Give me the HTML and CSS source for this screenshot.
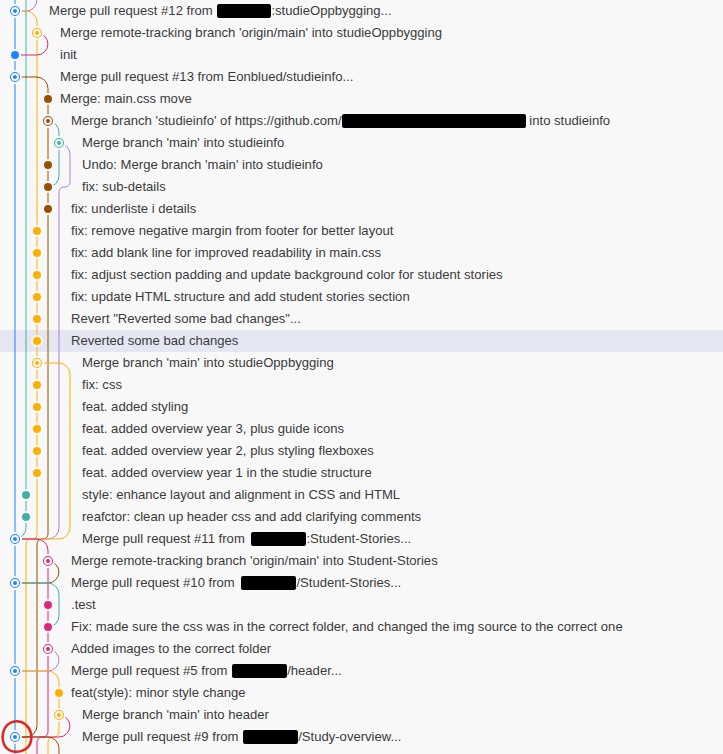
FILE: index.html
```html
<!DOCTYPE html>
<html lang="en">
<head>
<meta charset="utf-8">
<title>Source Control Graph</title>
<link rel="stylesheet" href="styles.css">
</head>
<body>
<div class="list">
  <div class="row"><svg class="graph" width="44" height="22"><path class="b" d="M11 0V22"/><path class="t" d="M22 0V22"/><path class="u" d="M33 0A11 11 0 0 1 22 11H11"/><path class="y" d="M22 11A11 11 0 0 1 33 22M22 11H11"/><circle class="b" cx="11" cy="11" r="6"/><circle class="b" cx="11" cy="11" r="3"/></svg><span class="label">Merge pull request #12 from <span class="redact w54"></span>:studieOppbygging...</span></div>

  <div class="row"><svg class="graph" width="55" height="22"><path class="b" d="M11 0V22"/><path class="t" d="M22 0V22"/><path class="y" d="M33 0V22"/><path class="p" d="M33 11A11 11 0 0 1 44 22"/><circle class="y" cx="33" cy="11" r="6"/><circle class="y" cx="33" cy="11" r="3"/></svg><span class="label">Merge remote-tracking branch 'origin/main' into studieOppbygging</span></div>

  <div class="row"><svg class="graph" width="55" height="22"><path class="b" d="M11 0V22"/><path class="t" d="M22 0V22"/><path class="y" d="M33 0V22"/><path class="p" d="M44 0A11 11 0 0 1 33 11H11"/><circle class="b" cx="11" cy="11" r="5"/></svg><span class="label">init</span></div>

  <div class="row"><svg class="graph" width="55" height="22"><path class="b" d="M11 0V22"/><path class="t" d="M22 0V22"/><path class="y" d="M33 0V22"/><path class="r" d="M33 11A11 11 0 0 1 44 22M33 11H11"/><circle class="b" cx="11" cy="11" r="6"/><circle class="b" cx="11" cy="11" r="3"/></svg><span class="label">Merge pull request #13 from Eonblued/studieinfo...</span></div>

  <div class="row"><svg class="graph" width="55" height="22"><path class="b" d="M11 0V22"/><path class="t" d="M22 0V22"/><path class="y" d="M33 0V22"/><path class="r" d="M44 0V22"/><circle class="r" cx="44" cy="11" r="5"/></svg><span class="label">Merge: main.css move</span></div>

  <div class="row"><svg class="graph" width="66" height="22"><path class="b" d="M11 0V22"/><path class="t" d="M22 0V22"/><path class="y" d="M33 0V22"/><path class="r" d="M44 0V22"/><path class="t" d="M44 11A11 11 0 0 1 55 22"/><circle class="r" cx="44" cy="11" r="6"/><circle class="r" cx="44" cy="11" r="3"/></svg><span class="label">Merge branch 'studieinfo' of https://github.com/<span class="redact w184 m0"></span> into studieinfo</span></div>

  <div class="row"><svg class="graph" width="77" height="22"><path class="b" d="M11 0V22"/><path class="t" d="M22 0V22"/><path class="y" d="M33 0V22"/><path class="r" d="M44 0V22"/><path class="t" d="M55 0V22"/><path class="u" d="M55 11A11 11 0 0 1 66 22"/><circle class="t" cx="55" cy="11" r="6"/><circle class="t" cx="55" cy="11" r="3"/></svg><span class="label">Merge branch 'main' into studieinfo</span></div>

  <div class="row"><svg class="graph" width="77" height="22"><path class="b" d="M11 0V22"/><path class="t" d="M22 0V22"/><path class="y" d="M33 0V22"/><path class="r" d="M44 0V22"/><path class="t" d="M55 0V22"/><path class="u" d="M66 0V22"/><circle class="r" cx="44" cy="11" r="5"/></svg><span class="label">Undo: Merge branch 'main' into studieinfo</span></div>

  <div class="row"><svg class="graph" width="77" height="22"><path class="b" d="M11 0V22"/><path class="t" d="M22 0V22"/><path class="y" d="M33 0V22"/><path class="r" d="M44 0V22"/><path class="t" d="M55 0A11 11 0 0 1 44 11"/><path class="u" d="M66 0V6A5 5 0 0 1 61 11H60A5 5 0 0 0 55 16V22"/><circle class="r" cx="44" cy="11" r="5"/></svg><span class="label">fix: sub-details</span></div>

  <div class="row"><svg class="graph" width="66" height="22"><path class="b" d="M11 0V22"/><path class="t" d="M22 0V22"/><path class="y" d="M33 0V22"/><path class="r" d="M44 0V22"/><path class="u" d="M55 0V22"/><circle class="r" cx="44" cy="11" r="5"/></svg><span class="label">fix: underliste i details</span></div>

  <div class="row"><svg class="graph" width="66" height="22"><path class="b" d="M11 0V22"/><path class="t" d="M22 0V22"/><path class="y" d="M33 0V22"/><path class="r" d="M44 0V22"/><path class="u" d="M55 0V22"/><circle class="y" cx="33" cy="11" r="5"/></svg><span class="label">fix: remove negative margin from footer for better layout</span></div>

  <div class="row"><svg class="graph" width="66" height="22"><path class="b" d="M11 0V22"/><path class="t" d="M22 0V22"/><path class="y" d="M33 0V22"/><path class="r" d="M44 0V22"/><path class="u" d="M55 0V22"/><circle class="y" cx="33" cy="11" r="5"/></svg><span class="label">fix: add blank line for improved readability in main.css</span></div>

  <div class="row"><svg class="graph" width="66" height="22"><path class="b" d="M11 0V22"/><path class="t" d="M22 0V22"/><path class="y" d="M33 0V22"/><path class="r" d="M44 0V22"/><path class="u" d="M55 0V22"/><circle class="y" cx="33" cy="11" r="5"/></svg><span class="label">fix: adjust section padding and update background color for student stories</span></div>

  <div class="row"><svg class="graph" width="66" height="22"><path class="b" d="M11 0V22"/><path class="t" d="M22 0V22"/><path class="y" d="M33 0V22"/><path class="r" d="M44 0V22"/><path class="u" d="M55 0V22"/><circle class="y" cx="33" cy="11" r="5"/></svg><span class="label">fix: update HTML structure and add student stories section</span></div>

  <div class="row"><svg class="graph" width="66" height="22"><path class="b" d="M11 0V22"/><path class="t" d="M22 0V22"/><path class="y" d="M33 0V22"/><path class="r" d="M44 0V22"/><path class="u" d="M55 0V22"/><circle class="y" cx="33" cy="11" r="5"/></svg><span class="label">Revert "Reverted some bad changes"...</span></div>

  <div class="row sel"><svg class="graph" width="66" height="22"><path class="b" d="M11 0V22"/><path class="t" d="M22 0V22"/><path class="y" d="M33 0V22"/><path class="r" d="M44 0V22"/><path class="u" d="M55 0V22"/><circle class="y" cx="33" cy="11" r="5"/></svg><span class="label">Reverted some bad changes</span></div>

  <div class="row"><svg class="graph" width="77" height="22"><path class="b" d="M11 0V22"/><path class="t" d="M22 0V22"/><path class="y" d="M33 0V22"/><path class="r" d="M44 0V22"/><path class="u" d="M55 0V22"/><path class="y" d="M55 11A11 11 0 0 1 66 22M55 11H33"/><circle class="y" cx="33" cy="11" r="6"/><circle class="y" cx="33" cy="11" r="3"/></svg><span class="label">Merge branch 'main' into studieOppbygging</span></div>

  <div class="row"><svg class="graph" width="77" height="22"><path class="b" d="M11 0V22"/><path class="t" d="M22 0V22"/><path class="y" d="M33 0V22"/><path class="r" d="M44 0V22"/><path class="u" d="M55 0V22"/><path class="y" d="M66 0V22"/><circle class="y" cx="33" cy="11" r="5"/></svg><span class="label">fix: css</span></div>

  <div class="row"><svg class="graph" width="77" height="22"><path class="b" d="M11 0V22"/><path class="t" d="M22 0V22"/><path class="y" d="M33 0V22"/><path class="r" d="M44 0V22"/><path class="u" d="M55 0V22"/><path class="y" d="M66 0V22"/><circle class="y" cx="33" cy="11" r="5"/></svg><span class="label">feat. added styling</span></div>

  <div class="row"><svg class="graph" width="77" height="22"><path class="b" d="M11 0V22"/><path class="t" d="M22 0V22"/><path class="y" d="M33 0V22"/><path class="r" d="M44 0V22"/><path class="u" d="M55 0V22"/><path class="y" d="M66 0V22"/><circle class="y" cx="33" cy="11" r="5"/></svg><span class="label">feat. added overview year 3, plus guide icons</span></div>

  <div class="row"><svg class="graph" width="77" height="22"><path class="b" d="M11 0V22"/><path class="t" d="M22 0V22"/><path class="y" d="M33 0V22"/><path class="r" d="M44 0V22"/><path class="u" d="M55 0V22"/><path class="y" d="M66 0V22"/><circle class="y" cx="33" cy="11" r="5"/></svg><span class="label">feat. added overview year 2, plus styling flexboxes</span></div>

  <div class="row"><svg class="graph" width="77" height="22"><path class="b" d="M11 0V22"/><path class="t" d="M22 0V22"/><path class="y" d="M33 0V22"/><path class="r" d="M44 0V22"/><path class="u" d="M55 0V22"/><path class="y" d="M66 0V22"/><circle class="y" cx="33" cy="11" r="5"/></svg><span class="label">feat. added overview year 1 in the studie structure</span></div>

  <div class="row"><svg class="graph" width="77" height="22"><path class="b" d="M11 0V22"/><path class="t" d="M22 0V22"/><path class="y" d="M33 0V22"/><path class="r" d="M44 0V22"/><path class="u" d="M55 0V22"/><path class="y" d="M66 0V22"/><circle class="t" cx="22" cy="11" r="5"/></svg><span class="label">style: enhance layout and alignment in CSS and HTML</span></div>

  <div class="row"><svg class="graph" width="77" height="22"><path class="b" d="M11 0V22"/><path class="t" d="M22 0V22"/><path class="y" d="M33 0V22"/><path class="r" d="M44 0V22"/><path class="u" d="M55 0V22"/><path class="y" d="M66 0V22"/><circle class="t" cx="22" cy="11" r="5"/></svg><span class="label">reafctor: clean up header css and add clarifying comments</span></div>

  <div class="row"><svg class="graph" width="77" height="22"><path class="b" d="M11 0V22"/><path class="t" d="M22 0A11 11 0 0 1 11 11"/><path class="y" d="M33 0V6A5 5 0 0 1 28 11H27A5 5 0 0 0 22 16V22"/><path class="r" d="M44 0V6A5 5 0 0 1 39 11H38A5 5 0 0 0 33 16V22"/><path class="u" d="M55 0A11 11 0 0 1 44 11H11"/><path class="y" d="M66 0A11 11 0 0 1 55 11H11"/><path class="p" d="M33 11A11 11 0 0 1 44 22M33 11H11"/><circle class="b" cx="11" cy="11" r="6"/><circle class="b" cx="11" cy="11" r="3"/></svg><span class="label">Merge pull request #11 from <span class="redact w55 m3"></span>:Student-Stories...</span></div>

  <div class="row"><svg class="graph" width="66" height="22"><path class="b" d="M11 0V22"/><path class="y" d="M22 0V22"/><path class="r" d="M33 0V22"/><path class="p" d="M44 0V22"/><path class="r" d="M44 11A11 11 0 0 1 55 22"/><circle class="p" cx="44" cy="11" r="6"/><circle class="p" cx="44" cy="11" r="3"/></svg><span class="label">Merge remote-tracking branch 'origin/main' into Student-Stories</span></div>

  <div class="row"><svg class="graph" width="66" height="22"><path class="b" d="M11 0V22"/><path class="y" d="M22 0V22"/><path class="r" d="M33 0V22"/><path class="p" d="M44 0V22"/><path class="r" d="M55 0A11 11 0 0 1 44 11H11"/><path class="t" d="M44 11A11 11 0 0 1 55 22M44 11H11"/><circle class="b" cx="11" cy="11" r="6"/><circle class="b" cx="11" cy="11" r="3"/></svg><span class="label">Merge pull request #10 from <span class="redact w55 m3"></span>/Student-Stories...</span></div>

  <div class="row"><svg class="graph" width="66" height="22"><path class="b" d="M11 0V22"/><path class="y" d="M22 0V22"/><path class="r" d="M33 0V22"/><path class="p" d="M44 0V22"/><path class="t" d="M55 0V22"/><circle class="p" cx="44" cy="11" r="5"/></svg><span class="label">.test</span></div>

  <div class="row"><svg class="graph" width="66" height="22"><path class="b" d="M11 0V22"/><path class="y" d="M22 0V22"/><path class="r" d="M33 0V22"/><path class="p" d="M44 0V22"/><path class="t" d="M55 0A11 11 0 0 1 44 11"/><circle class="p" cx="44" cy="11" r="5"/></svg><span class="label">Fix: made sure the css was in the correct folder, and changed the img source to the correct one</span></div>

  <div class="row"><svg class="graph" width="66" height="22"><path class="b" d="M11 0V22"/><path class="y" d="M22 0V22"/><path class="r" d="M33 0V22"/><path class="p" d="M44 0V22"/><path class="u" d="M44 11A11 11 0 0 1 55 22"/><circle class="p" cx="44" cy="11" r="6"/><circle class="p" cx="44" cy="11" r="3"/></svg><span class="label">Added images to the correct folder</span></div>

  <div class="row"><svg class="graph" width="66" height="22"><path class="b" d="M11 0V22"/><path class="y" d="M22 0V22"/><path class="r" d="M33 0V22"/><path class="p" d="M44 0V22"/><path class="u" d="M55 0A11 11 0 0 1 44 11H11"/><path class="y" d="M44 11A11 11 0 0 1 55 22M44 11H11"/><circle class="b" cx="11" cy="11" r="6"/><circle class="b" cx="11" cy="11" r="3"/></svg><span class="label">Merge pull request #5 from <span class="redact w55"></span>/header...</span></div>

  <div class="row"><svg class="graph" width="66" height="22"><path class="b" d="M11 0V22"/><path class="y" d="M22 0V22"/><path class="r" d="M33 0V22"/><path class="p" d="M44 0V22"/><path class="y" d="M55 0V22"/><circle class="y" cx="55" cy="11" r="5"/></svg><span class="label">feat(style): minor style change</span></div>

  <div class="row"><svg class="graph" width="77" height="22"><path class="b" d="M11 0V22"/><path class="y" d="M22 0V22"/><path class="r" d="M33 0V22"/><path class="p" d="M44 0V22"/><path class="y" d="M55 0V22"/><path class="p" d="M55 11A11 11 0 0 1 66 22"/><circle class="y" cx="55" cy="11" r="6"/><circle class="y" cx="55" cy="11" r="3"/></svg><span class="label">Merge branch 'main' into header</span></div>

  <div class="row"><svg class="graph" width="77" height="22"><path class="b" d="M11 0V22"/><path class="y" d="M22 0V22"/><path class="r" d="M33 0A11 11 0 0 1 22 11H11"/><path class="p" d="M44 0V6A5 5 0 0 1 39 11H38A5 5 0 0 0 33 16V22"/><path class="y" d="M55 0V6A5 5 0 0 1 50 11H49A5 5 0 0 0 44 16V22"/><path class="p" d="M66 0A11 11 0 0 1 55 11H11"/><path class="r" d="M44 11A11 11 0 0 1 55 22M44 11H11"/><circle class="b" cx="11" cy="11" r="6"/><circle class="b" cx="11" cy="11" r="3"/></svg><span class="label">Merge pull request #9 from <span class="redact w55"></span>/Study-overview...</span></div>

  <div class="row"><svg class="graph" width="66" height="22"><path class="b" d="M11 0V22"/><path class="y" d="M22 0V22"/><path class="p" d="M33 0V22"/><path class="y" d="M44 0V22"/><path class="r" d="M55 0V22"/></svg><span class="label"></span></div>

  <svg class="note" width="40" height="40"><path d="M25 6C19 1 9 3 5 10C1 17 2 28 9 32C16 36 27 33 30 26C33 19 31 11 26 7"/></svg>
</div>
</body>
</html>
```

FILE: styles.css
```css
html, body {
  margin: 0;
  padding: 0;
}

body {
  background: #f8f8f8;
  font-family: "Liberation Sans", Arial, sans-serif;
  font-size: 13.1px;
  color: #3b3b3b;
  overflow: hidden;
}

.list {
  position: relative;
}

.row {
  display: flex;
  align-items: center;
  height: 22px;
  padding-left: 4px;
  white-space: nowrap;
}

.row.sel {
  background: #e4e6f1;
}

.graph {
  flex: none;
  display: block;
}

.graph path {
  fill: none;
  stroke-width: 1px;
  stroke-linecap: round;
}

.graph circle {
  stroke: #f8f8f8;
  stroke-width: 2px;
}

.graph path.b { stroke: #1a85ff; }
.graph path.t { stroke: #40b0a6; }
.graph path.y { stroke: #ffb000; }
.graph path.p { stroke: #dc267f; }
.graph path.r { stroke: #994f00; }
.graph path.u { stroke: #b180d7; }

.graph circle.b { fill: #1a85ff; }
.graph circle.t { fill: #40b0a6; }
.graph circle.y { fill: #ffb000; }
.graph circle.p { fill: #dc267f; }
.graph circle.r { fill: #994f00; }

.label {
  line-height: 22px;
  margin-left: 1px;
}

.redact {
  display: inline-block;
  height: 14px;
  margin-left: 1px;
  background: #000;
  border-radius: 2px;
  vertical-align: -3px;
}

.w54 { width: 54px; }
.w55 { width: 55px; }
.w184 { width: 184px; }
.m0 { margin-left: 0; }
.m3 { margin-left: 3px; }

.note {
  position: absolute;
  left: 0;
  top: 718px;
  overflow: visible;
}

.note path {
  fill: none;
  stroke: #e3241c;
  stroke-width: 2.5px;
  stroke-linecap: round;
}
```
